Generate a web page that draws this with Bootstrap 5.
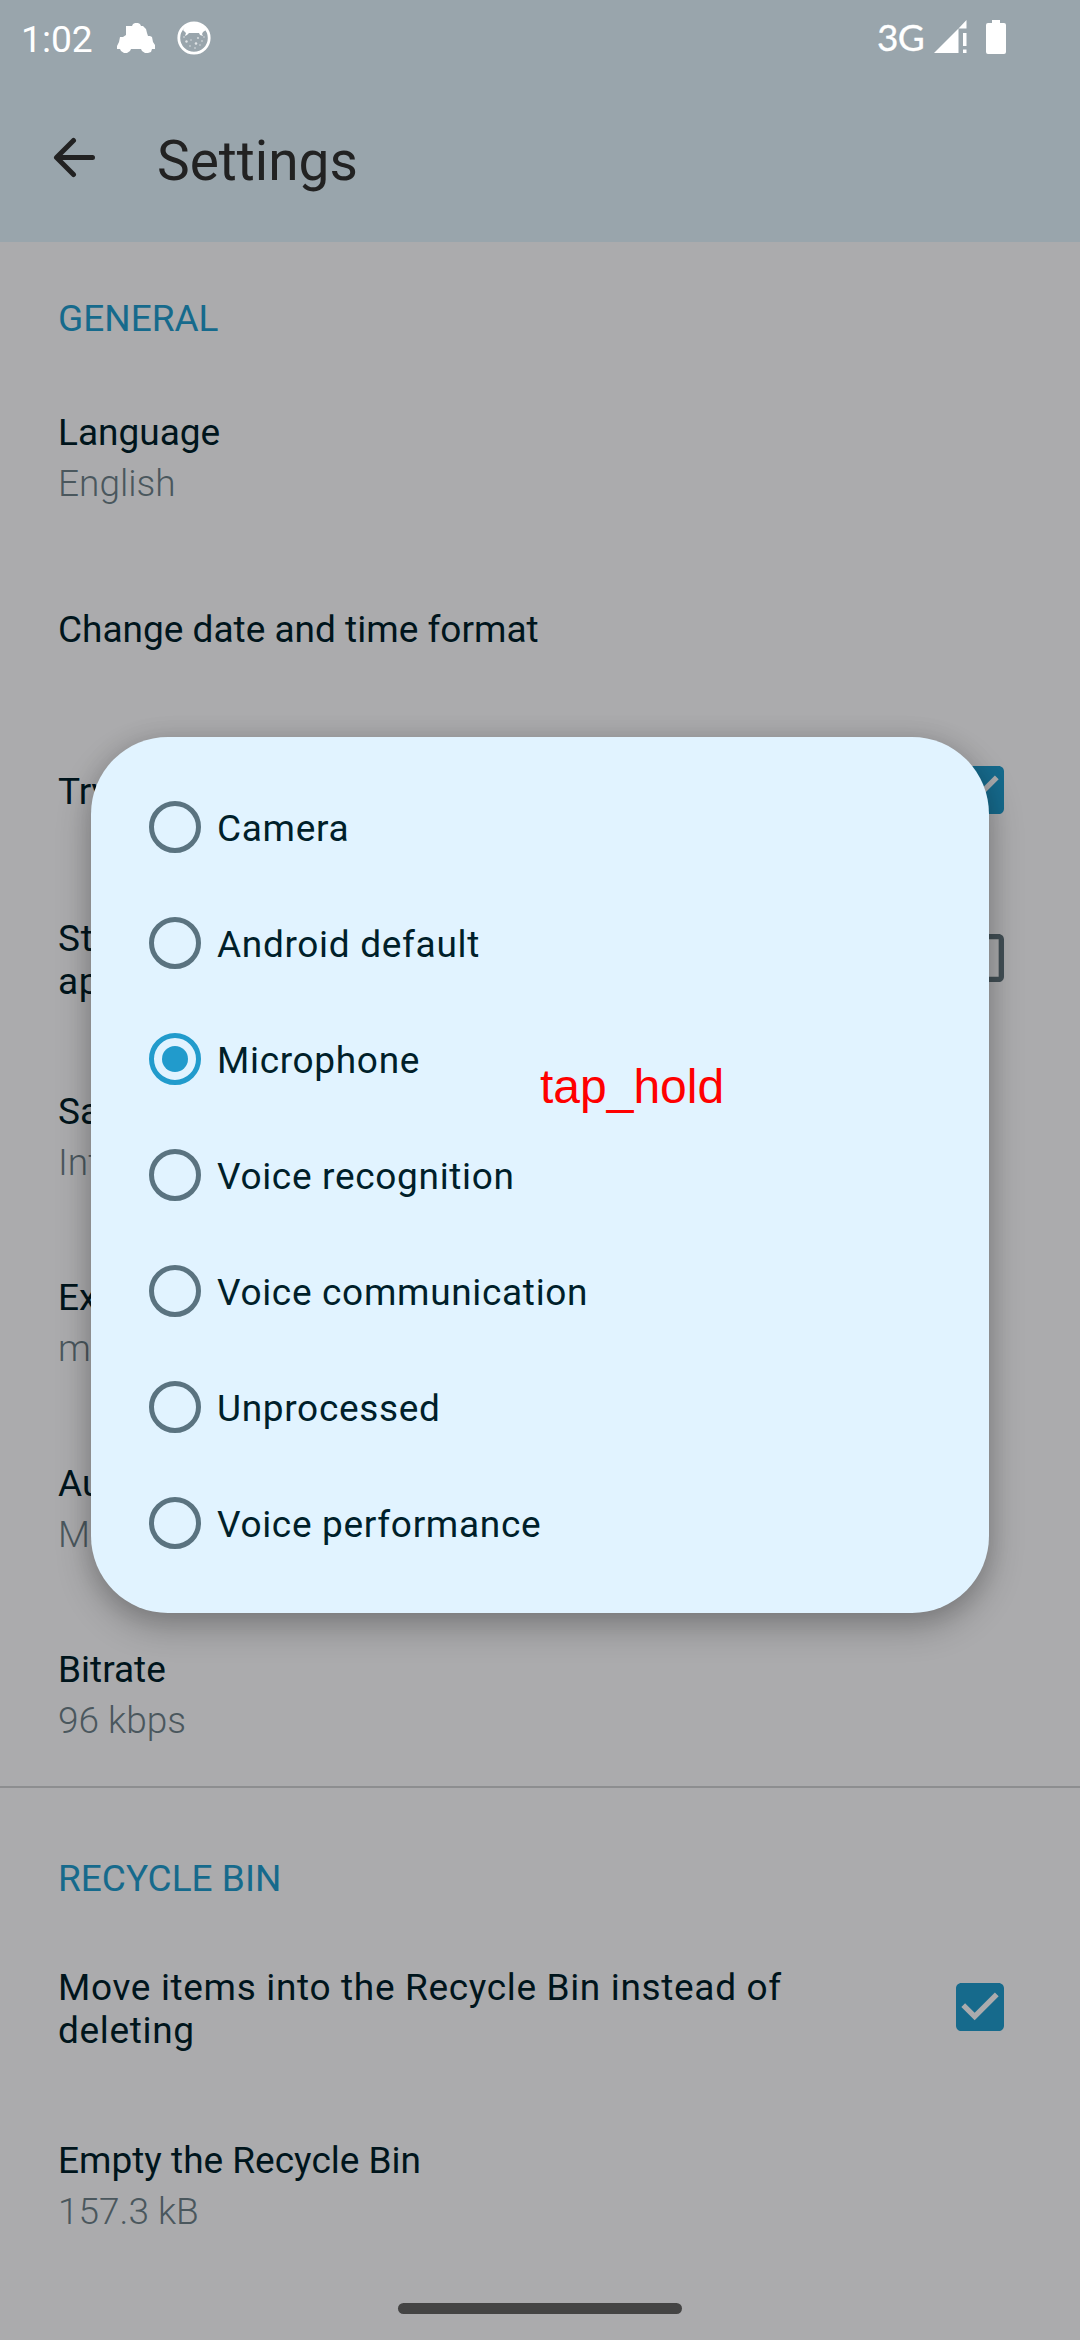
<!DOCTYPE html>
<html lang="en">
<head>
<meta charset="utf-8">
<meta name="viewport" content="width=device-width, initial-scale=1">
<title>Settings</title>
<link href="https://cdn.jsdelivr.net/npm/bootstrap@5.3.0/dist/css/bootstrap.min.css" rel="stylesheet">
<style>
body{background:#ababad;font-family:Roboto,sans-serif;font-size:37px;line-height:43px;color:#00151c;width:1080px;height:2340px;overflow:hidden}
.top-area{background:#99a5ac;height:242px}
.status-bar{height:76px;padding:0 74px 0 21px;color:#fff}
.clock{font-size:37.2px;width:96px;padding-top:2px}
.net-label{font-family:Lato,sans-serif;font-size:37px;font-weight:400;-webkit-text-stroke:.3px #fff;letter-spacing:-.7px;margin-right:9px;margin-top:-4px}
.status-art{margin-left:22px}
.battery{margin-left:17px;margin-top:-3px}
.signal{margin-top:-3px}
.title-bar{height:166px;padding:0 53px}
.title-bar svg{margin-top:-3px}
.title-text{font-size:55px;line-height:64px;color:#222;font-weight:400;margin-left:61px;padding-top:3px}
.section-label{color:#166a8c;padding:55px 58px 24px;height:122px}
.section-label.later{padding-top:69px;height:134px}
.pref{padding:2px 76px 0 58px;height:186px}
.pref .sub{color:#4a575d;font-weight:300;margin-top:8px}
.pref-date{height:157px}
.pref-try{height:166px;padding-top:0}
.pref-try span{padding-top:2px}
.pref-two{height:170px;padding-top:0;letter-spacing:.66px}
.pref-two .main-text{padding-top:4px;width:770px}
.rule{height:2px;margin:-1px 0 0;background:#8d8e90}
.picker{left:91px;top:737px;width:898px;height:876px;border-radius:77px;background:#e1f3ff;color:#001f2a;padding:32px 58px;box-shadow:0 14px 34px rgba(0,0,0,.26),0 0 24px rgba(0,0,0,.1)}
.choice{height:116px;letter-spacing:.68px}
.choice span{padding-top:3px;margin-left:16px}
.choice svg{color:#5a7380}
.choice.on svg{color:#219bcc}
.tap-note{left:540px;top:1059px;font:48px/56px "Liberation Sans",sans-serif;color:#f00}
.home-pill{left:398px;top:2303px;width:284px;height:11px;border-radius:6px;background:#444}
</style>
</head>
<body class="position-relative">
<svg class="d-none">
  <symbol id="checked" viewBox="3 3 18 18"><path fill="#166a8c" d="M19 3H5c-1.11 0-2 .9-2 2v14c0 1.1.89 2 2 2h14c1.11 0 2-.9 2-2V5c0-1.1-.89-2-2-2zm-9 14l-5-5 1.41-1.41L10 14.17l7.59-7.59L19 8l-9 9z"/></symbol>
  <symbol id="unchecked" viewBox="3 3 18 18"><path fill="#424f55" d="M19 5v14H5V5h14m0-2H5c-1.1 0-2 .9-2 2v14c0 1.1.9 2 2 2h14c1.1 0 2-.9 2-2V5c0-1.1-.9-2-2-2z"/></symbol>
  <symbol id="ring" viewBox="0 0 52 52"><circle cx="26" cy="26" r="23.5" fill="none" stroke="currentColor" stroke-width="5"/></symbol>
</svg>
<header class="top-area">
  <div class="status-bar d-flex align-items-center">
    <span class="clock">1:02</span>
    <svg width="38" height="30" viewBox="0 0 38 30" fill="#fff"><path d="M9 3h6l1-2 2-1h3l2 1 1 2h2l3 3 1 4 1 3h2l2 1 1 5 2 3 1 2v2h-4l-1 3-3 1h-3l-3-2-1-2H14l-1 2-3 2H7l-3-2-1-2H0v-3l2-4 1-5h3l3-2z"/></svg>
    <svg class="status-art" width="34" height="34" viewBox="0 0 34 34"><circle cx="17" cy="17" r="15.200" fill="none" stroke="#fff" stroke-width="2.800"/><path fill="#fff" d="M6 9a13 13 0 0 1 23 0l-3 2-1 2 1 2-3-1-1-2h-10l-2 2-2 1 1-3z"/><g fill="#fff" opacity=".7"><circle cx="9.500" cy="20.500" r="1.200"/><circle cx="19" cy="22.500" r="1.300"/><circle cx="14" cy="19" r=".7"/><circle cx="25" cy="20" r=".8"/><circle cx="13" cy="25" r=".8"/><circle cx="21" cy="17" r=".9"/><circle cx="7" cy="16" r=".8"/><circle cx="27" cy="16" r=".7"/><circle cx="18" cy="27" r=".8"/><circle cx="23" cy="24" r=".7"/></g></svg>
    <span class="net-label ms-auto">3G</span>
    <svg class="signal" width="36" height="34" viewBox="0 0 36 34" fill="#fff"><path d="M1 33 25.500 8.500V33zM25.500 8.500 33.500 0v8.500zM30 13h3.500v13H30zM30 29.500h3.500V33H30z"/></svg>
    <svg class="battery" width="20" height="34" viewBox="0 0 20 34" fill="#fff"><path d="M6 0h8v3h4q2 0 2 2v27q0 2-2 2H2q-2 0-2-2V5q0-2 2-2h4z"/></svg>
  </div>
  <nav class="title-bar d-flex align-items-center">
    <svg width="43" height="42" viewBox="0 0 43 42" fill="none" stroke="#222" stroke-width="5" stroke-linecap="round" stroke-linejoin="round"><path d="M20.500 3.500 3.500 20.500 20.500 37.500M4 20.500h35.500"/></svg>
    <h1 class="title-text mb-0">Settings</h1>
  </nav>
</header>
<main>
  <div class="section-label">GENERAL</div>
  <div class="pref d-flex flex-column justify-content-center"><div>Language</div><div class="sub">English</div></div>
  <div class="pref pref-date d-flex align-items-center"><span>Change date and time format</span></div>
  <div class="pref pref-try d-flex align-items-center justify-content-between"><span>Try to</span><svg width="48" height="48"><use href="#checked"/></svg></div>
  <div class="pref pref-two d-flex align-items-center justify-content-between"><div class="main-text">Start<br>app</div><svg width="48" height="48"><use href="#unchecked"/></svg></div>
  <div class="pref d-flex flex-column justify-content-center"><div>Save in</div><div class="sub">Internal</div></div>
  <div class="pref d-flex flex-column justify-content-center"><div>Extension</div><div class="sub">m4a</div></div>
  <div class="pref d-flex flex-column justify-content-center"><div>Audio</div><div class="sub">Mic</div></div>
  <div class="pref d-flex flex-column justify-content-center"><div>Bitrate</div><div class="sub">96 kbps</div></div>
  <div class="rule"></div>
  <div class="section-label later">RECYCLE BIN</div>
  <div class="pref pref-two d-flex align-items-center justify-content-between"><div class="main-text">Move items into the Recycle Bin instead of deleting</div><svg width="48" height="48"><use href="#checked"/></svg></div>
  <div class="pref d-flex flex-column justify-content-center"><div>Empty the Recycle Bin</div><div class="sub">157.3 kB</div></div>
</main>
<div class="picker position-absolute d-flex flex-column" role="dialog">
  <label class="choice d-flex align-items-center"><svg width="52" height="52"><use href="#ring"/></svg><span>Camera</span></label>
  <label class="choice d-flex align-items-center"><svg width="52" height="52"><use href="#ring"/></svg><span>Android default</span></label>
  <label class="choice on d-flex align-items-center"><svg width="52" height="52"><use href="#ring"/><circle cx="26" cy="26" r="13" fill="currentColor"/></svg><span>Microphone</span></label>
  <label class="choice d-flex align-items-center"><svg width="52" height="52"><use href="#ring"/></svg><span>Voice recognition</span></label>
  <label class="choice d-flex align-items-center"><svg width="52" height="52"><use href="#ring"/></svg><span>Voice communication</span></label>
  <label class="choice d-flex align-items-center"><svg width="52" height="52"><use href="#ring"/></svg><span>Unprocessed</span></label>
  <label class="choice d-flex align-items-center"><svg width="52" height="52"><use href="#ring"/></svg><span>Voice performance</span></label>
</div>
<div class="tap-note position-absolute">tap_hold</div>
<div class="home-pill position-absolute"></div>
<script src="https://cdn.jsdelivr.net/npm/bootstrap@5.3.0/dist/js/bootstrap.bundle.min.js"></script>
</body>
</html>
